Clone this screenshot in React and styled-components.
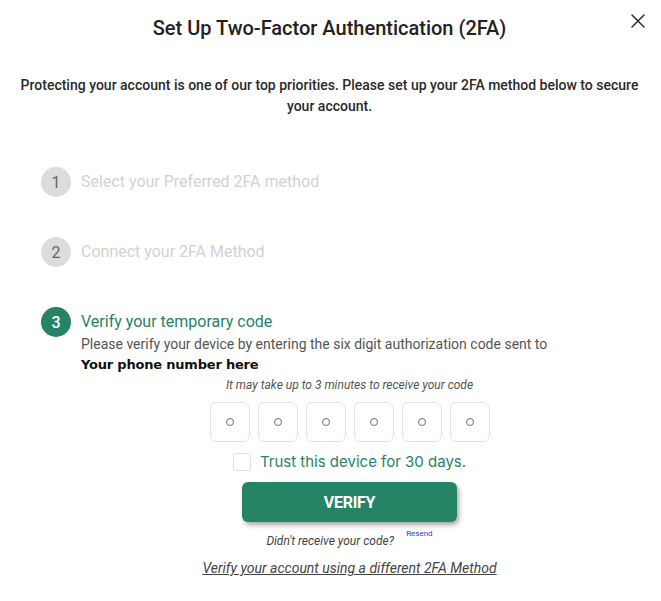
import React from "react";
import styled, { createGlobalStyle } from "styled-components";

const Global = createGlobalStyle`
  html, body { margin: 0; padding: 0; background: #fff; }
  body { font-family: Roboto, "Liberation Sans", sans-serif; color: #333; }
  * { box-sizing: border-box; }
`;

const Modal = styled.div`
  position: relative;
  width: 661px;
  height: 601px;
  padding: 14px 43px 0 41px;
`;

const Close = styled.button`
  position: absolute;
  top: 12px;
  right: 14px;
  width: 18px;
  height: 18px;
  padding: 0;
  border: none;
  background: none;
  cursor: pointer;
  color: #2b2f3a;
`;

const Title = styled.h1`
  margin: 0;
  text-align: center;
  font-size: 20px;
  font-weight: 500;
  line-height: 28px;
  color: #222;
`;

const Intro = styled.p`
  margin: 33px -22px 0 -22px;
  text-align: center;
  font-size: 14px;
  font-weight: 500;
  line-height: 21px;
  color: #2a2a2a;
`;

const Steps = styled.div`
  display: flex;
  flex-direction: column;
  margin-top: 50px;
  gap: 40px;
`;

const Step = styled.div`
  display: grid;
  grid-template-columns: 30px 1fr;
  column-gap: 10px;
  align-items: start;
`;

const Circle = styled.div`
  width: 30px;
  height: 30px;
  border-radius: 50%;
  display: flex;
  align-items: center;
  justify-content: center;
  font-size: 16px;
  font-weight: ${(p) => (p.$active ? 500 : 400)};
  background: ${(p) => (p.$active ? "#268466" : "#dcdcdc")};
  color: ${(p) => (p.$active ? "#fff" : "#666")};
`;

const StepTitle = styled.div`
  font-size: 16px;
  line-height: 30px;
  color: ${(p) => (p.$active ? "#268466" : "#d2d2d2")};
`;

const StepBody = styled.div`
  display: flex;
  flex-direction: column;
`;

const Desc = styled.div`
  margin-top: -3px;
  font-size: 14px;
  line-height: 20px;
  color: #555;
`;

const Phone = styled.div`
  font-family: "DejaVu Sans", Verdana, sans-serif;
  font-weight: 700;
  font-size: 13px;
  line-height: 21px;
  color: #111;
  letter-spacing: -0.2px;
`;

const Centered = styled.div`
  display: flex;
  flex-direction: column;
  align-items: center;
`;

const Hint = styled.div`
  margin-top: 3px;
  font-size: 12px;
  font-style: italic;
  color: #555;
  line-height: 14px;
`;

const Codes = styled.div`
  display: flex;
  gap: 8px;
  margin-top: 10px;
`;

const CodeBox = styled.div`
  width: 40px;
  height: 40px;
  border: 1px solid #e3e3ec;
  border-radius: 6px;
  display: flex;
  align-items: center;
  justify-content: center;
`;

const Dot = styled.span`
  width: 8px;
  height: 8px;
  border: 1.3px solid #6b7080;
  border-radius: 50%;
`;

const TrustRow = styled.label`
  display: flex;
  align-items: center;
  gap: 9px;
  margin-top: 10px;
  font-family: Inter, sans-serif;
  font-size: 15px;
  color: #268466;
  line-height: 20px;
`;

const Box = styled.span`
  width: 18px;
  height: 18px;
  border: 1px solid #e0e0e8;
  border-radius: 2px;
  background: #fff;
`;

const Verify = styled.button`
  margin-top: 10px;
  width: 215px;
  height: 40px;
  border: none;
  border-radius: 6px;
  background: #268466;
  color: #fff;
  font-family: Roboto, sans-serif;
  font-weight: 700;
  font-size: 16px;
  letter-spacing: -0.3px;
  box-shadow: 2px 3px 5px rgba(0, 0, 0, 0.35);
  cursor: pointer;
`;

const ResendRow = styled.div`
  display: flex;
  align-items: flex-start;
  gap: 12px;
  margin-top: 7px;
`;

const Didnt = styled.span`
  font-size: 12px;
  font-style: italic;
  color: #444;
  margin-top: 5px;
  line-height: 14px;
`;

const Resend = styled.a`
  font-size: 8px;
  color: #1a3fd6;
  text-decoration: none;
  line-height: 10px;
`;

const Alt = styled.a`
  margin-top: 11px;
  font-size: 14px;
  font-style: italic;
  color: #444;
  text-decoration: underline;
  line-height: 18px;
`;

export default function App() {
  return (
    <>
      <Global />
      <Modal>
        <Close aria-label="close">
          <svg width="18" height="18" viewBox="0 0 18 18">
            <path d="M3 3 L15 15 M15 3 L3 15" stroke="currentColor" strokeWidth="1.5" strokeLinecap="round" />
          </svg>
        </Close>
        <Title>Set Up Two-Factor Authentication (2FA)</Title>
        <Intro>
          Protecting your account is one of our top priorities. Please set up your 2FA method below to secure
          your account.
        </Intro>
        <Steps>
          <Step>
            <Circle>1</Circle>
            <StepTitle>Select your Preferred 2FA method</StepTitle>
          </Step>
          <Step>
            <Circle>2</Circle>
            <StepTitle>Connect your 2FA Method</StepTitle>
          </Step>
          <Step>
            <Circle $active>3</Circle>
            <StepBody>
              <StepTitle $active>Verify your temporary code</StepTitle>
              <Desc>Please verify your device by entering the six digit authorization code sent to</Desc>
              <Phone>Your phone number here</Phone>
              <Centered>
                <Hint>It may take up to 3 minutes to receive your code</Hint>
                <Codes>
                  {[0, 1, 2, 3, 4, 5].map((i) => (
                    <CodeBox key={i}>
                      <Dot />
                    </CodeBox>
                  ))}
                </Codes>
                <TrustRow>
                  <Box />
                  Trust this device for 30 days.
                </TrustRow>
                <Verify>VERIFY</Verify>
                <ResendRow>
                  <Didnt>Didn't receive your code?</Didnt>
                  <Resend href="#">Resend</Resend>
                </ResendRow>
                <Alt href="#">Verify your account using a different 2FA Method</Alt>
              </Centered>
            </StepBody>
          </Step>
        </Steps>
      </Modal>
    </>
  );
}
